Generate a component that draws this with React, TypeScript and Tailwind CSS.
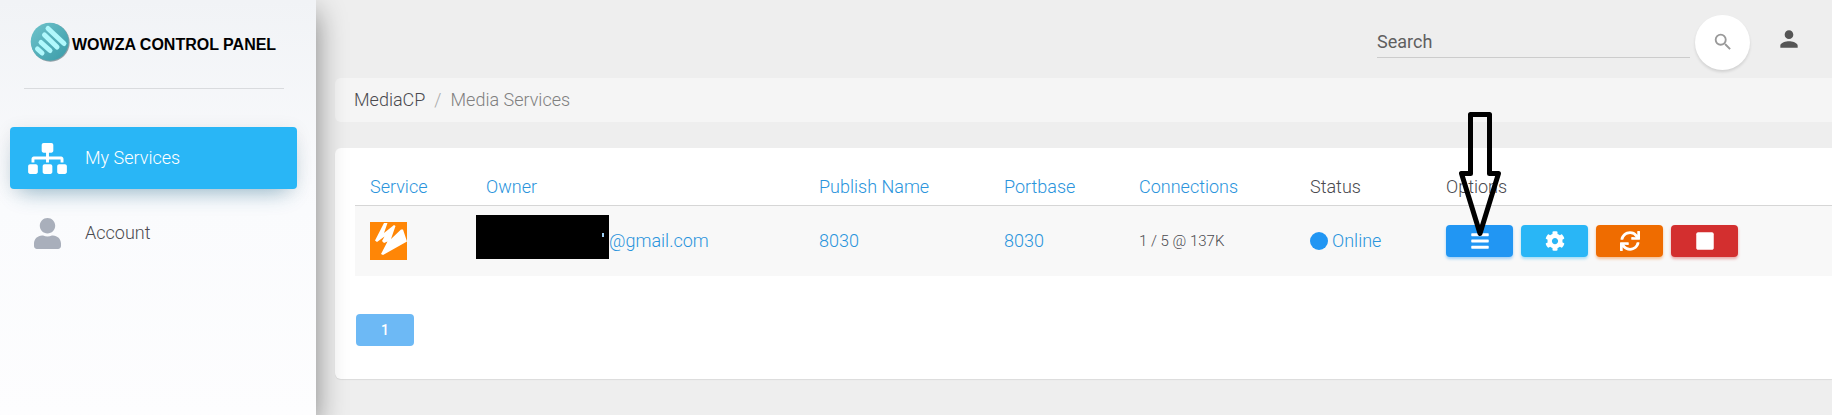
import type { ReactNode } from "react";
import { FaBars, FaCog, FaSitemap, FaStop, FaSync, FaUser } from "react-icons/fa";
import { MdPerson, MdSearch } from "react-icons/md";

interface Service {
  port: string;
  owner: string;
  connections: string;
  status: string;
}

interface Column {
  title: string;
  width: string;
  sortable: boolean;
}

const columns: Column[] = [
  { title: "Service", width: "w-[116px]", sortable: true },
  { title: "Owner", width: "w-[333px]", sortable: true },
  { title: "Publish Name", width: "w-[185px]", sortable: true },
  { title: "Portbase", width: "w-[135px]", sortable: true },
  { title: "Connections", width: "w-[171px]", sortable: true },
  { title: "Status", width: "w-[136px]", sortable: false },
];

const services: Service[] = [
  { port: "8030", owner: "@gmail.com", connections: "1 / 5 @ 137K", status: "Online" },
];

const Logo = () => (
  <svg viewBox="0 0 40 40" className="size-10 shrink-0" aria-hidden="true">
    <defs>
      <linearGradient id="disc" x1="0" y1="0" x2="1" y2="1">
        <stop offset="0" stopColor="#6fc3cb" />
        <stop offset="1" stopColor="#3a9ba8" />
      </linearGradient>
    </defs>
    <circle cx="20.5" cy="20.5" r="19.2" fill="#8f9fa6" />
    <circle cx="19.7" cy="19.7" r="19" fill="url(#disc)" />
    <g stroke="#b0f8fc" strokeWidth="5" strokeLinecap="round">
      <path d="M18 6.500 34 21.500" />
      <path d="M14.500 13 27 25" />
      <path d="M11 20.500 20 28.500" />
      <path d="M7.500 27 12 31" />
    </g>
  </svg>
);

const ServiceIcon = () => (
  <svg viewBox="0 0 37 38" className="h-[38px] w-[37px]" role="img" aria-label="Wowza">
    <rect width="37" height="38" fill="#ff8606" />
    <path
      d="M14 1 5 18.500 7 20 14.500 14.500 12 19 14 21 17.500 19.500 11 32 13 33 37 19.500 33 7.500 31 7.500 21 17 25.500 4 24 3 14 11 17.500 1Z"
      fill="#fff"
    />
  </svg>
);

const NavItem = ({ icon, label, active }: { icon: ReactNode; label: string; active?: boolean }) => (
  <a
    href="#"
    className={
      active
        ? "flex h-[62px] items-center rounded bg-[#29b6f6] pl-4 text-white shadow-[0_12px_22px_-10px_rgba(30,110,150,0.45),0_2px_18px_rgba(0,0,0,0.07)]"
        : "flex h-[62px] items-center rounded pl-4"
    }
  >
    <span className="flex w-[43px] justify-center">{icon}</span>
    <span className="ml-4">{label}</span>
  </a>
);

const ActionButton = ({ label, color, children }: { label: string; color: string; children: ReactNode }) => (
  <button
    type="button"
    aria-label={label}
    className={`flex h-8 w-[67px] items-center justify-center rounded text-xl text-white ${color}`}
  >
    {children}
  </button>
);

const App = () => {
  return (
    <div className="flex min-h-screen overflow-hidden bg-[#eeeeee] font-['Roboto',sans-serif] text-lg font-light text-[#4a4a4f]">
      {/* sidebar */}
      <aside className="z-10 w-[316px] shrink-0 bg-linear-to-b from-[#f1f3f6] via-[#fafbfd] to-[#fdfdfe] shadow-[0_12px_28px_rgba(0,0,0,0.45)]">
        <div className="mr-8 ml-6 flex h-[89px] items-center border-b border-[#d9dbde] pb-1">
          <div className="ml-1.5 flex items-center gap-0.5">
            <Logo />
            <span className="pt-1.5 whitespace-nowrap font-['Liberation_Sans',sans-serif] text-base font-bold text-black">
              WOWZA CONTROL PANEL
            </span>
          </div>
        </div>
        <nav className="mt-[38px] flex flex-col gap-[13px] pr-[19px] pl-2.5">
          <NavItem icon={<FaSitemap className="h-[31px] w-[39px]" />} label="My Services" active />
          <NavItem icon={<FaUser className="h-[31px] w-[27px] text-[#a9afbb]" />} label="Account" />
        </nav>
      </aside>

      <main className="min-w-0 flex-1 pl-[19px]">
        {/* top bar */}
        <header className="flex h-[78px] items-center justify-end pt-1.5 pr-[30px]">
          <form className="flex items-center gap-[5px]">
            <input
              type="text"
              aria-label="Search"
              placeholder="Search"
              className="h-8 w-[313px] border-b border-[#cccccc] bg-transparent font-normal outline-none placeholder:text-[#5f5f5f]"
            />
            <button
              type="button"
              aria-label="Search"
              className="flex size-[55px] items-center justify-center rounded-full bg-white text-[22px] text-[#999999] shadow-[0_2px_3px_rgba(0,0,0,0.12)]"
            >
              <MdSearch />
            </button>
          </form>
          <a href="#" aria-label="Profile" className="ml-[26px] text-[26px] text-[#555555]">
            <MdPerson className="-mt-1.5" />
          </a>
        </header>

        <ol className="flex h-11 items-center rounded-l-md bg-[#f5f5f5] pl-[19px]">
          <li>
            <a href="#">MediaCP</a>
          </li>
          <li className="px-[9px] text-[#aaaaaa]">/</li>
          <li className="text-[#808080]">Media Services</li>
        </ol>

        <section className="mt-[26px] rounded-l-md bg-white pt-[17px] pb-[33px] pl-5 shadow-[0_1px_1px_rgba(0,0,0,0.08)]">
          <table className="w-full table-fixed text-left">
            <thead>
              <tr className="h-10 border-b border-[#d6d6d6]">
                {columns.map((col) => (
                  <th key={col.title} className={`px-[15px] pt-1 font-light ${col.width}`}>
                    {col.sortable ? (
                      <a href="#" className="text-[#2a94dc]">
                        {col.title}
                      </a>
                    ) : (
                      col.title
                    )}
                  </th>
                ))}
                <th className="relative px-[15px] pt-1 font-light">
                  Options
                  {/* arrow pointing at the menu button */}
                  <svg
                    viewBox="0 0 50 130"
                    className="pointer-events-none absolute -top-[57px] left-6 h-[130px] w-[50px]"
                    fill="none"
                    stroke="#000"
                    strokeWidth="5"
                    strokeLinejoin="round"
                    aria-hidden="true"
                  >
                    <path d="M15.500 6.500H34.500V65.500H43.500L25 125.500 6.500 65.500H15.500Z" />
                  </svg>
                </th>
              </tr>
            </thead>
            <tbody>
              {services.map((service) => (
                <tr key={service.port} className="h-[71px] bg-[#f8f8f8] text-[#2a94dc]">
                  <td className="px-[15px]">
                    <ServiceIcon />
                  </td>
                  <td className="pl-[5px]">
                    <div className="-mt-2 flex items-center">
                      <span className="flex h-11 w-[133px] justify-end bg-black pt-[18px] pr-[5px]">
                        <span className="h-1 w-0.5 bg-[#9fd0f5]" />
                      </span>
                      <a href="#" className="mt-2">{service.owner}</a>
                    </div>
                  </td>
                  <td className="px-[15px]">
                    <a href="#">{service.port}</a>
                  </td>
                  <td className="px-[15px]">
                    <a href="#">{service.port}</a>
                  </td>
                  <td className="px-[15px] pt-0.5 text-[15px] text-[#4a4a4f]">{service.connections}</td>
                  <td className="px-[15px]">
                    <a href="#" className="flex items-center gap-1">
                      <span className="size-[18px] rounded-full bg-[#2196f3]" />
                      {service.status}
                    </a>
                  </td>
                  <td className="px-[15px]">
                    <div className="flex gap-2">
                      <ActionButton label="Menu" color="bg-[#2196f3] shadow-[0_2px_3px_rgba(33,150,243,0.4)]">
                        <FaBars />
                      </ActionButton>
                      <ActionButton label="Settings" color="bg-[#29b6f6] shadow-[0_2px_3px_rgba(41,182,246,0.4)]">
                        <FaCog />
                      </ActionButton>
                      <ActionButton label="Restart" color="bg-[#ef6c00] shadow-[0_2px_3px_rgba(239,108,0,0.4)]">
                        <FaSync />
                      </ActionButton>
                      <ActionButton label="Stop" color="bg-[#d32f2f] shadow-[0_2px_3px_rgba(211,47,47,0.4)]">
                        <FaStop />
                      </ActionButton>
                    </div>
                  </td>
                </tr>
              ))}
            </tbody>
          </table>

          <button type="button" className="mt-[38px] ml-px block h-8 w-[58px] rounded bg-[#6db9f5] text-sm font-medium text-white">
            1
          </button>
        </section>
      </main>
    </div>
  );
};

export default App;
